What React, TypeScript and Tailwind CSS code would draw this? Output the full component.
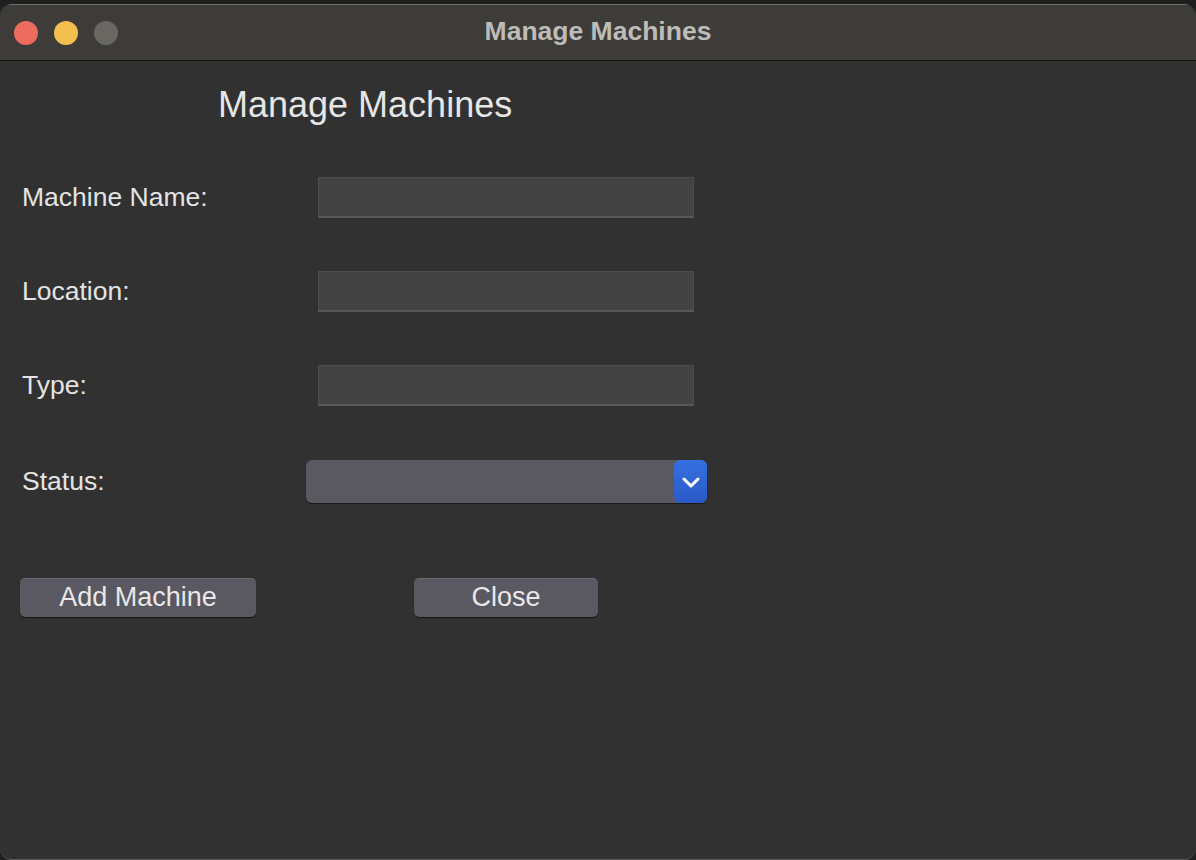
const font = { fontFamily: '"Liberation Sans", Arial, sans-serif' };

function TextRow({ label }: { label: string }) {
  return (
    <div className="flex items-center h-[41px]">
      <div className="w-[318px] pl-[22px] text-[26.5px] text-[#e4e4e4]">{label}</div>
      <div className="w-[376px] h-[41px] bg-[#434343] border border-[#4c4c4c] border-b-2 border-b-[#585858]" />
    </div>
  );
}

export default function App() {
  return (
    <div className="w-[1196px] h-[860px] bg-[#1f1f1f] pt-[4px] overflow-hidden" style={font}>
      <div className="h-[856px] rounded-[12px] bg-[#313131] overflow-hidden flex flex-col border-b border-b-[#5a5a5a]">
        {/* title bar */}
        <div className="relative h-[57px] shrink-0 bg-[#3d3c38] border-t border-t-[#6e6d69] border-b border-b-[#111] flex items-center">
          <div className="flex items-center gap-[16px] pl-[14px]">
            <span className="w-[24px] h-[24px] rounded-full bg-[#ed6a5e]" />
            <span className="w-[24px] h-[24px] rounded-full bg-[#f5bf4f]" />
            <span className="w-[24px] h-[24px] rounded-full bg-[#686762]" />
          </div>
          <div className="absolute inset-0 flex items-center justify-center text-[26.5px] font-bold text-[#bdbcb8] pb-[2px]">
            Manage Machines
          </div>
        </div>

        {/* content */}
        <div className="flex flex-col">
          <h1 className="ml-[218px] mt-[24px] text-[36px] leading-[40px] text-[#e6e6e6]">Manage Machines</h1>

          <div className="mt-[52px] flex flex-col gap-[53px]">
            <TextRow label="Machine Name:" />
            <TextRow label="Location:" />
            <TextRow label="Type:" />
          </div>

          <div className="mt-[54px] flex items-center h-[43px]">
            <div className="w-[306px] pl-[22px] text-[26.5px] text-[#e4e4e4]">Status:</div>
            <div className="w-[401px] h-[43px] rounded-[6px] bg-[#5a5860] shadow-[0_1px_1px_rgba(0,0,0,0.5)] flex justify-end">
              <div className="w-[33px] h-[43px] rounded-[6px] bg-gradient-to-b from-[#3470e0] to-[#2b5ac6] flex items-center justify-center">
                <svg width="20" height="14" viewBox="0 0 20 14" fill="none">
                  <path d="M3 4l7 7 7-7" stroke="white" strokeWidth="3" strokeLinecap="round" strokeLinejoin="round" />
                </svg>
              </div>
            </div>
          </div>

          <div className="mt-[75px] flex items-center">
            <button className="ml-[20px] w-[236px] h-[39px] rounded-[5px] bg-[#5a5860] border-t border-t-[#6a6870] shadow-[0_1px_1px_rgba(0,0,0,0.6)] text-[27px] text-[#e8e8e8] leading-none pb-[2px]">
              Add Machine
            </button>
            <button className="ml-[158px] w-[184px] h-[39px] rounded-[5px] bg-[#5a5860] border-t border-t-[#6a6870] shadow-[0_1px_1px_rgba(0,0,0,0.6)] text-[27px] text-[#e8e8e8] leading-none pb-[2px]">
              Close
            </button>
          </div>
        </div>
      </div>
    </div>
  );
}
